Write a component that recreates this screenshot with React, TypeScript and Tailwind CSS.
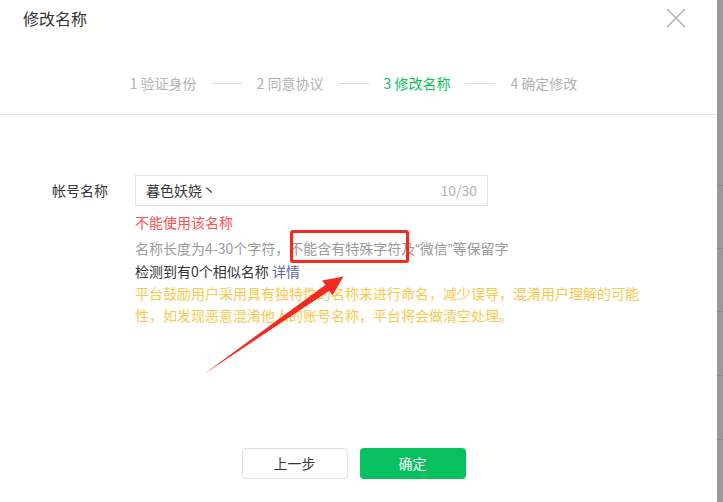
import React from "react";

const font = { fontFamily: '"Noto Sans CJK SC", "Noto Sans", sans-serif' };

function Step({ n, label, active }: { n: number; label: string; active?: boolean }) {
  return (
    <span className={`text-[14px] leading-[20px] whitespace-nowrap ${active ? "text-[#07c160]" : "text-[#b2b2b2]"}`}>
      {n} {label}
    </span>
  );
}

function Line() {
  return <span className="mx-[15px] h-px w-[30px] bg-[#d9d9d9]" />;
}

export default function App() {
  return (
    <div className="relative flex h-[502px] w-[723px] overflow-hidden bg-white" style={font}>
      <div className="flex flex-1 flex-col">
        <div className="h-[115px] border-b border-[#e5e5e5]">
          <div className="flex h-[36px] items-center justify-between pl-[23px] pr-[31px]">
            <span className="text-[16px] leading-[18px] text-[#353535]">修改名称</span>
            <svg width="20" height="20" viewBox="0 0 20 20">
              <path d="M1 1 L19 19 M19 1 L1 19" stroke="#b2b2b2" strokeWidth="1.5" fill="none" />
            </svg>
          </div>
          <div className="mt-[37px] flex items-center justify-center pr-[10px]">
            <Step n={1} label="验证身份" />
            <Line />
            <Step n={2} label="同意协议" />
            <Line />
            <Step n={3} label="修改名称" active />
            <Line />
            <Step n={4} label="确定修改" />
          </div>
        </div>

        <div className="mt-[60px] flex">
          <div className="w-[135px] pl-[52px] pt-[5px] text-[14px] leading-[20px] text-[#353535]">帐号名称</div>
          <div className="w-[510px]">
            <div className="flex h-[31px] w-[353px] items-center justify-between border border-[#e3e3e3] px-[10px] text-[14px]">
              <span className="text-[#353535]">暮色妖娆丶</span>
              <span className="text-[#b2b2b2]">10/30</span>
            </div>
            <div className="mt-[5px] text-[14px] leading-[22px] text-[#fa5151]">不能使用该名称</div>
            <div className="mt-[4px] text-[14px] leading-[22px] text-[#9a9a9a]">
              名称长度为4-30个字符，不能含有特殊字符及
              <span style={{ fontFamily: '"Liberation Sans", sans-serif' }}>“</span>微信
              <span style={{ fontFamily: '"Liberation Sans", sans-serif' }}>”</span>等保留字
            </div>
            <div className="text-[14px] leading-[22px] text-[#353535]">
              检测到有0个相似名称 <span className="text-[#576b95]">详情</span>
            </div>
            <div className="text-[14px] leading-[22px] text-[#fbc84e]">
              平台鼓励用户采用具有独特性的名称来进行命名，减少误导，混淆用户理解的可能性，如发现恶意混淆他人的账号名称，平台将会做清空处理。
            </div>
          </div>
        </div>

        <div className="mt-auto flex justify-center gap-[12px] pb-[23px] pr-[10px]">
          <button className="h-[31px] w-[106px] rounded-[4px] border border-[#e0e0e0] bg-white text-[14px] text-[#353535]">
            上一步
          </button>
          <button className="h-[31px] w-[106px] rounded-[4px] bg-[#07c160] text-[14px] text-white">
            确定
          </button>
        </div>
      </div>

      <div className="flex w-[6px] flex-col bg-[#999999]">
        <div className="h-[185px]" />
        <div className="h-[63px] border-t border-[#8a8a8a]" />
        <div className="h-[63px] border-t border-[#8a8a8a]" />
        <div className="h-[64px] border-t border-[#8a8a8a]" />
        <div className="h-[64px] border-t border-[#8a8a8a]" />
        <div className="flex-1 border-t border-[#8a8a8a]" />
      </div>

      <div className="pointer-events-none absolute left-[290px] top-[230px] h-[33px] w-[119px] rounded-[3px] border-[3px] border-[#f52a1e]" />
      <svg className="pointer-events-none absolute left-0 top-0" width="723" height="502">
        <polygon
          points="204,374 325.3,284.9 322.2,280.4 343.5,276.5 332.4,295.2 329.3,290.7"
          fill="#f52a1e"
        />
      </svg>
    </div>
  );
}
